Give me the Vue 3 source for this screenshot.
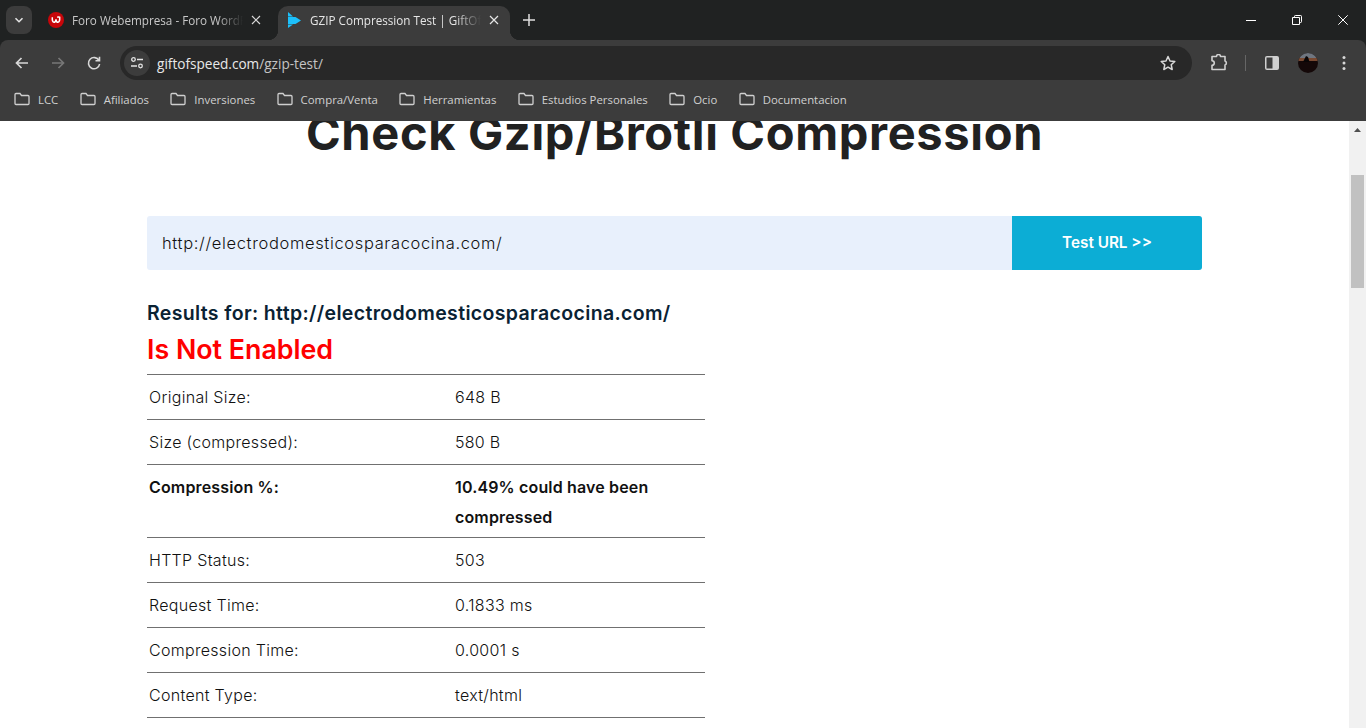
<template>
  <div class="window">
    <header class="chrome">
      <div class="tabstrip">
        <button class="tab-search">
          <svg width="10" height="10" viewBox="0 0 10 10"><path d="M1.500 3.200 5 6.700l3.500-3.500" fill="none" stroke="#e3e3e3" stroke-width="1.600" /></svg>
        </button>
        <div class="tab">
          <span class="favicon">
            <svg width="16" height="16" viewBox="0 0 16 16">
              <circle cx="8" cy="8" r="8" fill="#c8060a" />
              <path d="M4.300 5.300c-.2 3.400.4 5 1.700 5 1 0 1.700-1.200 2-3 .2 1.800.9 3 1.900 3 1.300 0 2-1.600 1.800-5-.8-.3-1.600-.3-2.500-.1" fill="none" stroke="#fff" stroke-width="1.500" />
            </svg>
          </span>
          <span class="tab-title">Foro Webempresa - Foro WordPress</span>
          <svg class="tab-close" width="10" height="10" viewBox="0 0 10 10"><path d="M1 1l8 8M9 1l-8 8" stroke="#d8d8d8" stroke-width="1.200" /></svg>
        </div>
        <div class="tab active">
          <span class="favicon">
            <svg width="16" height="16" viewBox="0 0 16 16">
              <path d="M0 0 5 4.500H0zM0 5H7.500L13 8.500 7.500 12H0zM0 12.500H5L0 16z" fill="#1cc0fb" />
            </svg>
          </span>
          <span class="tab-title">GZIP Compression Test | GiftOfSpeed</span>
          <svg class="tab-close" width="10" height="10" viewBox="0 0 10 10"><path d="M1 1l8 8M9 1l-8 8" stroke="#e6e6e6" stroke-width="1.200" /></svg>
        </div>
        <svg class="new-tab" width="12" height="12" viewBox="0 0 12 12"><path d="M6 0v12M0 6h12" stroke="#e0e0e0" stroke-width="1.500" /></svg>
        <div class="win-controls">
          <svg width="10" height="10" viewBox="0 0 10 10"><path d="M0 5.500h10" stroke="#fff" /></svg>
          <svg width="10" height="10" viewBox="0 0 10 10"><path d="M.5 2.500h7v7h-7zM2.500 2.500V1.300c0-.5.300-.8.800-.8h5.400c.5 0 .8.300.8.800v5.400c0 .5-.3.800-.8.800H7.500" fill="none" stroke="#fff" /></svg>
          <svg width="10" height="10" viewBox="0 0 10 10"><path d="M.3.300l9.400 9.400M9.700.3.300 9.700" stroke="#fff" /></svg>
        </div>
      </div>

      <div class="toolbar">
        <svg class="tb-icon back" width="16" height="16" viewBox="0 0 16 16"><path d="M14 8H3M7.500 3 2.500 8l5 5" fill="none" stroke="#d8d8d8" stroke-width="1.700" /></svg>
        <svg class="tb-icon fwd" width="16" height="16" viewBox="0 0 16 16"><path d="M2 8h11M8.500 3l5 5-5 5" fill="none" stroke="#777" stroke-width="1.700" /></svg>
        <svg class="tb-icon reload" width="16" height="16" viewBox="0 0 16 16"><path d="M13 5.500A5.600 5.600 0 1 0 13.600 9M13.500 1.800v4h-4" fill="none" stroke="#d8d8d8" stroke-width="1.600" /></svg>
        <div class="omnibox">
          <span class="site-info">
            <svg width="16" height="16" viewBox="0 0 16 16">
              <circle cx="4.500" cy="4.500" r="1.800" fill="none" stroke="#e3e3e3" stroke-width="1.300" />
              <path d="M8 4.500h6M2 11h6" stroke="#e3e3e3" stroke-width="1.500" />
              <circle cx="11.500" cy="11" r="1.800" fill="none" stroke="#e3e3e3" stroke-width="1.300" />
            </svg>
          </span>
          <span class="url">giftofspeed.com<span class="url-path">/gzip-test/</span></span>
          <svg class="star" width="16" height="16" viewBox="0 0 16 16"><path d="M8 1.500l2 4.500 4.800.5-3.600 3.200 1 4.800L8 12.100 3.800 14.500l1-4.800L1.200 6.500 6 6z" fill="none" stroke="#d8d8d8" stroke-width="1.500" stroke-linejoin="round" /></svg>
        </div>
        <svg class="ext" width="18" height="18" viewBox="0 0 18 18"><path d="M2 2.500h4.500a2 2 0 0 1 4 0H15v4.600a2 2 0 0 1 0 3.800V15.500H2v-4.200a2.200 2.200 0 0 0 0-4.600z" fill="none" stroke="#d0d0d0" stroke-width="1.600" stroke-linejoin="round" /></svg>
        <span class="tb-sep"></span>
        <svg class="side" width="14" height="14" viewBox="0 0 14 14"><rect width="14" height="14" rx="2" fill="#d0d0d0" /><rect x="1.500" y="1.500" width="6" height="11" fill="#3c3c3c" /></svg>
        <svg class="avatar" width="20" height="20" viewBox="0 0 20 20">
          <defs><clipPath id="av"><circle cx="10" cy="10" r="10" /></clipPath></defs>
          <g clip-path="url(#av)">
            <rect width="20" height="20" fill="#140808" />
            <rect width="20" height="5" fill="#6f7680" />
            <rect y="5" width="20" height="3" fill="#7a4a32" />
            <path d="M5 9l3-6 2 1 1.500 5z" fill="#090505" />
          </g>
        </svg>
        <svg class="menu" width="4" height="16" viewBox="0 0 4 16"><circle cx="2" cy="2.500" r="1.500" fill="#d8d8d8" /><circle cx="2" cy="8" r="1.500" fill="#d8d8d8" /><circle cx="2" cy="13.500" r="1.500" fill="#d8d8d8" /></svg>
      </div>

      <div class="bookmarks">
        <div v-for="b in bookmarks" :key="b" class="bookmark">
          <svg width="16" height="14" viewBox="0 0 16 14"><path d="M1 2.500c0-.6.400-1 1-1h4l1.500 2H14c.6 0 1 .4 1 1v7c0 .6-.4 1-1 1H2c-.6 0-1-.4-1-1z" fill="none" stroke="#cfcfcf" stroke-width="1.300" /></svg>
          <span>{{ b }}</span>
        </div>
      </div>
    </header>

    <div class="viewport">
      <main class="page">
        <h1>Check Gzip/Brotli Compression</h1>
        <form class="test-form" @submit.prevent>
          <div class="url-field">http://electrodomesticosparacocina.com/</div>
          <button class="test-btn">Test URL &gt;&gt;</button>
        </form>
        <h3>Results for: http://electrodomesticosparacocina.com/</h3>
        <h2>Is Not Enabled</h2>
        <table>
          <tbody>
            <tr v-for="r in rows" :key="r.label" :class="{ strong: r.strong }">
              <td class="lbl">{{ r.label }}</td>
              <td>{{ r.value }}</td>
            </tr>
          </tbody>
        </table>
      </main>
      <aside class="scrollbar">
        <svg width="17" height="17" viewBox="0 0 17 17"><path d="M5 11l3.500-4 3.500 4z" fill="#505050" /></svg>
        <div class="thumb"></div>
      </aside>
    </div>
  </div>
</template>

<script setup>
const bookmarks = [
  "LCC",
  "Afiliados",
  "Inversiones",
  "Compra/Venta",
  "Herramientas",
  "Estudios Personales",
  "Ocio",
  "Documentacion",
];

const rows = [
  { label: "Original Size:", value: "648 B" },
  { label: "Size (compressed):", value: "580 B" },
  { label: "Compression %:", value: "10.49% could have been compressed", strong: true },
  { label: "HTTP Status:", value: "503" },
  { label: "Request Time:", value: "0.1833 ms" },
  { label: "Compression Time:", value: "0.0001 s" },
  { label: "Content Type:", value: "text/html" },
];
</script>

<style>
html,
body {
  margin: 0;
  overflow: hidden;
}
</style>

<style scoped>
.window {
  width: 1366px;
  height: 728px;
  display: flex;
  flex-direction: column;
  overflow: hidden;
  background: #fff;
  font-family: "Inter", "Liberation Sans", sans-serif;
}
.chrome {
  height: 121px;
  flex: none;
  background: #202222;
  font-family: "Open Sans", "Liberation Sans", sans-serif;
  color: #e3e3e3;
}
.tabstrip {
  height: 40px;
  display: flex;
  align-items: flex-start;
  padding: 6px 0 0 6px;
  box-sizing: border-box;
}
.tab-search {
  width: 26px;
  height: 28px;
  margin-right: 8px;
  padding: 0;
  border: none;
  border-radius: 8px;
  background: #3c3c3c;
  display: flex;
  align-items: center;
  justify-content: center;
}
.tab {
  width: 232px;
  height: 34px;
  display: flex;
  align-items: center;
  padding: 0 11px 6px 8px;
  box-sizing: border-box;
  font-size: 11.700px;
  color: #c8c8c8;
  border-radius: 10px 10px 0 0;
}
.tab.active {
  background: #3c3c3c;
  color: #e6e6e6;
  margin-left: 6px;
  padding-left: 10px;
  position: relative;
}
.tab.active::before,
.tab.active::after {
  content: "";
  position: absolute;
  bottom: 0;
  width: 10px;
  height: 10px;
}
.tab.active::before {
  left: -10px;
  background: radial-gradient(circle at 0 0, #202222 10px, #3c3c3c 10.500px);
}
.tab.active::after {
  right: -10px;
  background: radial-gradient(circle at 100% 0, #202222 10px, #3c3c3c 10.500px);
}
.favicon {
  flex: none;
  display: flex;
  width: 16px;
  height: 16px;
}
.tab-title {
  flex: 1;
  margin-left: 8px;
  white-space: nowrap;
  overflow: hidden;
  -webkit-mask-image: linear-gradient(90deg, #000 85%, transparent 100%);
  mask-image: linear-gradient(90deg, #000 85%, transparent 100%);
}
.tab.active .tab-title {
  margin-left: 6px;
}
.tab-close {
  flex: none;
  margin-left: 8px;
}
.new-tab {
  margin: 8px 0 0 13px;
}
.win-controls {
  margin-left: auto;
  display: flex;
  gap: 36px;
  padding: 9px 18px 0 0;
}
.toolbar {
  height: 44px;
  background: #3c3c3c;
  border-radius: 8px 8px 0 0;
  display: flex;
  align-items: center;
  padding: 2px 14px 0;
  box-sizing: border-box;
}
.tb-icon {
  flex: none;
  margin-right: 20px;
}
.reload {
  margin-right: 18px;
}
.omnibox {
  width: 1072px;
  height: 34px;
  flex: none;
  display: flex;
  align-items: center;
  background: #282828;
  border-radius: 17px;
  padding: 0 16px 0 4px;
  box-sizing: border-box;
}
.site-info {
  width: 26px;
  height: 26px;
  border-radius: 50%;
  background: #3c3c3c;
  display: flex;
  align-items: center;
  justify-content: center;
}
.url {
  margin-left: 7px;
  font-size: 13.600px;
  color: #e8e8e8;
}
.url-path {
  color: #c4c4c4;
}
.star {
  margin-left: auto;
}
.ext {
  flex: none;
  margin-left: 18px;
}
.tb-sep {
  width: 1px;
  height: 16px;
  margin: 0 19px 0 17px;
  background: #666;
  flex: none;
}
.side {
  flex: none;
}
.avatar {
  flex: none;
  margin-left: 19px;
}
.menu {
  flex: none;
  margin-left: 24px;
}
.bookmarks {
  height: 37px;
  background: #3c3c3c;
  display: flex;
  align-items: center;
  padding: 0 14px 7px;
  box-sizing: border-box;
  gap: 21.400px;
  font-size: 11.400px;
  color: #d0d0d0;
}
.bookmark {
  display: flex;
  align-items: center;
  gap: 8px;
  white-space: nowrap;
}
.viewport {
  flex: 1;
  min-height: 0;
  display: flex;
  overflow: hidden;
}
.page {
  flex: 1;
  min-width: 0;
  padding: 0 147px;
  box-sizing: border-box;
  color: #222;
}
h1 {
  margin: -16px 0 0;
  height: 111px;
  line-height: 56px;
  text-align: center;
  font-size: 47px;
  font-weight: 700;
  color: #212121;
  white-space: nowrap;
  letter-spacing: 0.65px;
}
.test-form {
  width: 1055px;
  height: 54px;
  display: flex;
  border-radius: 3px;
  overflow: hidden;
  background: #e8f0fc;
}
.url-field {
  flex: 1;
  padding-left: 15px;
  line-height: 54px;
  font-size: 16.500px;
  font-weight: 300;
  letter-spacing: 0.65px;
  color: #111;
}
.test-btn {
  width: 190px;
  padding: 0 0 2px;
  border: none;
  background: #0cadd5;
  color: #fff;
  font: 600 15.300px "Inter", "Liberation Sans", sans-serif;
}
h3 {
  margin: 28px 0 0;
  line-height: 30px;
  font-size: 19.500px;
  font-weight: 600;
  letter-spacing: 0.35px;
  color: #0a2233;
  white-space: nowrap;
}
h2 {
  margin: 1px 0 0;
  line-height: 40px;
  font-size: 26.800px;
  font-weight: 600;
  color: #f00;
}
table {
  width: 558px;
  margin-top: 5px;
  border-collapse: collapse;
  border-top: 1px solid #707070;
  font-size: 16px;
  font-weight: 300;
  line-height: 30px;
  letter-spacing: 0.3px;
  color: #111;
}
td {
  padding: 7px 2px;
  vertical-align: top;
  border-bottom: 1px solid #707070;
}
.lbl {
  width: 302px;
}
.strong td {
  padding-bottom: 5px;
  font-weight: 600;
  letter-spacing: 0.15px;
  color: #111;
}
.scrollbar {
  width: 17px;
  flex: none;
  background: #f1f1f1;
  display: flex;
  flex-direction: column;
  align-items: center;
}
.thumb {
  width: 13px;
  height: 113px;
  margin-top: 37px;
  background: #c1c1c1;
}
</style>
